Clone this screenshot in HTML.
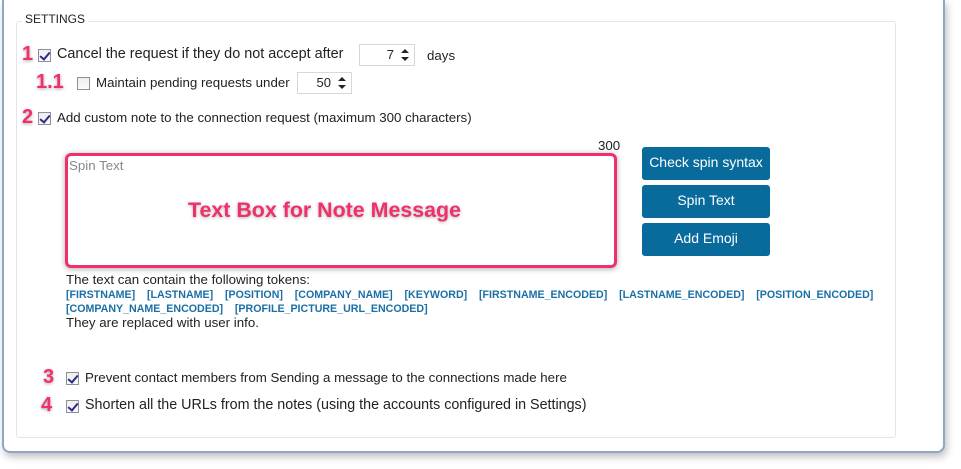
<!DOCTYPE html>
<html><head><meta charset="utf-8"><style>
*{margin:0;padding:0;box-sizing:border-box}
body{width:961px;height:469px;background:#fff;position:relative;overflow:hidden;font-family:"Liberation Sans",sans-serif;font-size:13.3px;color:#222}
.a{position:absolute;white-space:nowrap}
.win{position:absolute;left:2px;top:0px;width:943px;height:453px;border:2px solid #8ea6c8;border-top:none;border-radius:0 0 8px 8px;box-shadow:2px 4px 8px rgba(0,0,0,.25);background:#fff}
.fs{position:absolute;left:16px;top:21px;width:880px;height:417px;border:1px solid #dfe6ee;border-radius:3px}
.cb{position:absolute;width:13px;height:13px;border:1px solid #8e8f99;background:linear-gradient(#eee,#fafafa)}
.cb.on::after{content:"";position:absolute;left:3px;top:0px;width:4px;height:8px;border:solid #2a2a8a;border-width:0 2px 2px 0;transform:rotate(40deg)}
.num{position:absolute;color:#f0306a;font-weight:bold;font-size:20px;text-shadow:0 1px 3px rgba(0,0,0,.35)}
.spin{position:absolute;height:22px;border:1px solid #d8d8d8;background:#fff;font-size:13px;text-align:right;padding:2px 20px 0 0}
.spin::after{content:"";position:absolute;right:5px;top:4px;width:0;height:0;border:4px solid transparent;border-bottom:4px solid #222;border-top:none}
.spin::before{content:"";position:absolute;right:5px;top:12px;width:0;height:0;border:4px solid transparent;border-top:4px solid #222;border-bottom:none}
.btn{position:absolute;left:642px;width:128px;height:33px;background:#086b9c;color:#fff;border-radius:3px;text-align:center;line-height:30px;font-size:14px}
.tok{color:#1a6fa6;font-weight:bold;font-size:10.65px}
</style></head><body>
<div class="win"></div>
<div class="fs"></div>
<div class="a" style="left:22px;top:12px;background:#fff;padding:0 3px;font-size:12px">SETTINGS</div>

<div class="num" style="left:22px;top:43px">1</div>
<div class="cb on" style="left:38px;top:49px"></div>
<div class="a" style="left:57px;top:46px;font-size:14.4px">Cancel the request if they do not accept after</div>
<div class="spin" style="left:359px;top:44px;width:56px">7</div>
<div class="a" style="left:427px;top:48px">days</div>

<div class="num" style="left:36px;top:71px">1.1</div>
<div class="cb" style="left:77px;top:77px"></div>
<div class="a" style="left:96px;top:75px">Maintain pending requests under</div>
<div class="spin" style="left:297px;top:72px;width:55px">50</div>

<div class="num" style="left:22px;top:106px">2</div>
<div class="cb on" style="left:38px;top:112px"></div>
<div class="a" style="left:57px;top:110px">Add custom note to the connection request (maximum 300 characters)</div>

<div class="a" style="left:598px;top:138px">300</div>
<div class="a" style="left:65px;top:153px;width:552px;height:115px;border:3px solid #f0306a;border-radius:6px;box-shadow:0 1px 6px rgba(0,0,0,.35)"></div>
<div class="a" style="left:69px;top:158px;color:#888">Spin Text</div>
<div class="a" style="left:188px;top:198px;color:#f0306a;font-weight:bold;font-size:21.4px;text-shadow:0 1px 3px rgba(0,0,0,.3)">Text Box for Note Message</div>

<div class="btn" style="top:147px">Check spin syntax</div>
<div class="btn" style="top:185px">Spin Text</div>
<div class="btn" style="top:223px">Add Emoji</div>

<div class="a" style="left:66px;top:272px">The text can contain the following tokens:</div>
<div class="a tok" style="left:66px;top:289px">[FIRSTNAME]&nbsp;&nbsp;&nbsp;&nbsp;[LASTNAME]&nbsp;&nbsp;&nbsp;&nbsp;[POSITION]&nbsp;&nbsp;&nbsp;&nbsp;[COMPANY_NAME]&nbsp;&nbsp;&nbsp;&nbsp;[KEYWORD]&nbsp;&nbsp;&nbsp;&nbsp;[FIRSTNAME_ENCODED]&nbsp;&nbsp;&nbsp;&nbsp;[LASTNAME_ENCODED]&nbsp;&nbsp;&nbsp;&nbsp;[POSITION_ENCODED]</div>
<div class="a tok" style="left:66px;top:303px">[COMPANY_NAME_ENCODED]&nbsp;&nbsp;&nbsp;&nbsp;[PROFILE_PICTURE_URL_ENCODED]</div>
<div class="a" style="left:66px;top:315px">They are replaced with user info.</div>

<div class="num" style="left:43px;top:366px">3</div>
<div class="cb on" style="left:66px;top:372px"></div>
<div class="a" style="left:85px;top:370px">Prevent contact members from Sending a message to the connections made here</div>
<div class="num" style="left:41px;top:394px">4</div>
<div class="cb on" style="left:66px;top:400px"></div>
<div class="a" style="left:85px;top:397px;font-size:14.3px">Shorten all the URLs from the notes (using the accounts configured in Settings)</div>
</body></html>
